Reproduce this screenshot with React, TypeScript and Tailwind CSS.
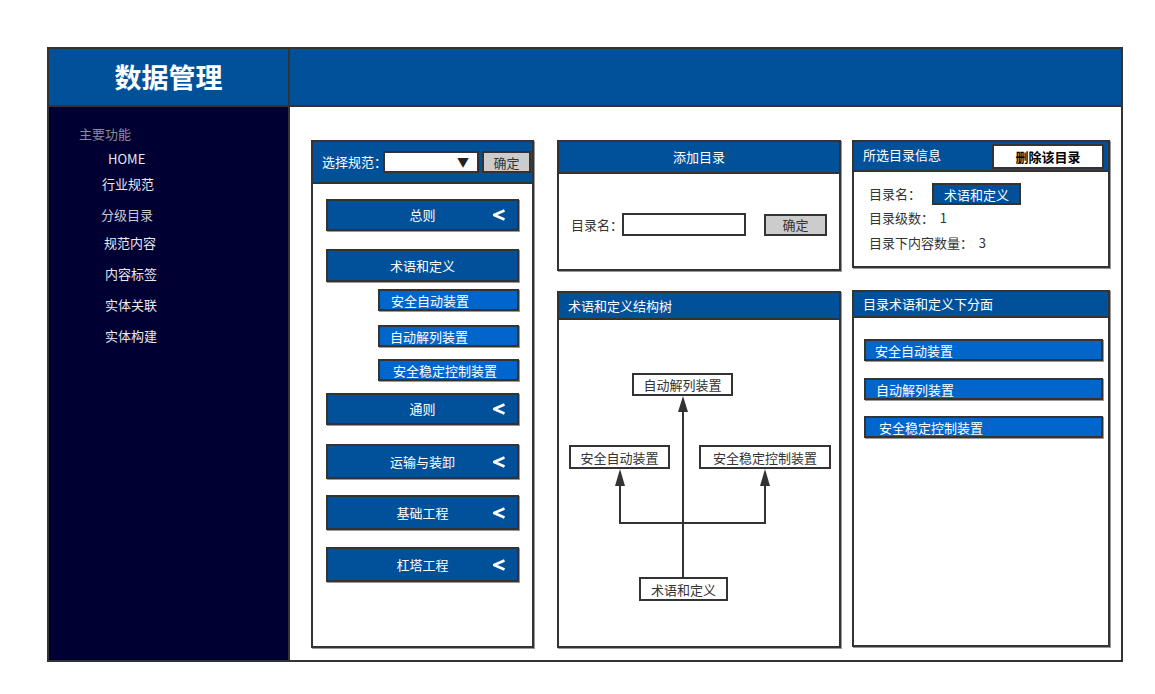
import React from "react";

const FONT = { fontFamily: '"Noto Sans CJK SC", "Noto Sans", sans-serif' };

function Chevron() {
  return (
    <svg width="12" height="12" viewBox="0 0 12 12" className="absolute right-[12px] top-1/2 -translate-y-1/2">
      <polyline points="11.5,1.5 1.2,6 11.5,10.5" fill="none" stroke="white" strokeWidth="2.6" strokeLinejoin="miter" />
    </svg>
  );
}

function AccordionItem({ label, h, mt, chevron = true }: { label: string; h: string; mt: string; chevron?: boolean }) {
  return (
    <div className={`relative ml-[13px] w-[193px] ${h} ${mt} bg-[#00519a] border-2 border-[#333] shadow-[1px_1px_0_#999] flex items-center justify-center text-white text-[13px]`}>
      <span>{label}</span>
      {chevron && <Chevron />}
    </div>
  );
}

function SubItem({ label, mt, pl }: { label: string; mt: string; pl: string }) {
  return (
    <div className={`ml-[65px] w-[141px] h-[22px] ${mt} ${pl} bg-[#0066cc] border-2 border-[#333] shadow-[1px_1px_0_#999] flex items-center text-white text-[13px] leading-none`}>
      {label}
    </div>
  );
}

function FacetItem({ label, mt, pl }: { label: string; mt: string; pl: string }) {
  return (
    <div className={`ml-[10px] w-[239px] h-[22px] ${mt} ${pl} bg-[#0066cc] border-2 border-[#333] shadow-[1px_1px_0_#999] flex items-center text-white text-[13px] leading-none`}>
      {label}
    </div>
  );
}

function TreeNode({ label, cls }: { label: string; cls: string }) {
  return (
    <div className={`absolute ${cls} bg-white border-2 border-[#333] flex items-center justify-center text-[13px] text-[#333] leading-none`}>
      {label}
    </div>
  );
}

const sideItems = [
  { label: "主要功能", cls: "mt-[17px] ml-[30px] text-[#8a8a9a]" },
  { label: "HOME", cls: "mt-[5px] ml-[59px] text-[#e8e8f0]" },
  { label: "行业规范", cls: "mt-[5px] ml-[53px] text-[#e8e8f0]" },
  { label: "分级目录", cls: "mt-[11px] ml-[52px] text-[#c8c8d4]" },
  { label: "规范内容", cls: "mt-[8px] ml-[55px] text-[#e8e8f0]" },
  { label: "内容标签", cls: "mt-[11px] ml-[56px] text-[#e8e8f0]" },
  { label: "实体关联", cls: "mt-[11px] ml-[56px] text-[#e8e8f0]" },
  { label: "实体构建", cls: "mt-[11px] ml-[56px] text-[#e8e8f0]" },
];

export default function App() {
  return (
    <div className="w-[1155px] h-[694px] bg-white overflow-hidden pt-[47px] pl-[47px]" style={FONT}>
      <div className="w-[1076px] h-[615px] border-2 border-[#333] flex flex-col">
        {/* header */}
        <div className="h-[58px] flex border-b-2 border-[#333] bg-[#00519a] shrink-0">
          <div className="w-[241px] border-r-2 border-[#333] flex items-center justify-center">
            <span className="text-white text-[27px] font-bold">数据管理</span>
          </div>
          <div className="flex-1" />
        </div>

        <div className="flex-1 flex min-h-0">
          {/* sidebar */}
          <div className="w-[241px] border-r-2 border-[#333] bg-[#000033] flex flex-col text-[13px]">
            {sideItems.map((s) => (
              <div key={s.label} className={`h-[20px] leading-[20px] ${s.cls}`}>{s.label}</div>
            ))}
          </div>

          {/* content */}
          <div className="flex-1 bg-white pl-[21px] pt-[33px] flex items-start">
            {/* left panel */}
            <div className="w-[223px] h-[508px] border-2 border-[#333] shadow-[1px_1px_0_#999] flex flex-col">
              <div className="h-[42px] bg-[#00519a] border-b-2 border-[#333] flex items-center pl-[9px] text-[13px]">
                <span className="text-white">选择规范：</span>
                <div className="relative ml-[-4px] w-[96px] h-[22px] bg-white border-2 border-[#333]">
                  <span className="absolute right-[8px] top-1/2 -translate-y-1/2 text-[12px] text-[#222] leading-none">▼</span>
                </div>
                <div className="ml-[3px] w-[49px] h-[22px] bg-[#cccccc] border-2 border-[#333] flex items-center justify-center text-[#333] leading-none">确定</div>
              </div>
              <AccordionItem label="总则" h="h-[32px]" mt="mt-[15px]" />
              <AccordionItem label="术语和定义" h="h-[33px]" mt="mt-[18px]" chevron={false} />
              <SubItem label="安全自动装置" mt="mt-[7px]" pl="pl-[11px]" />
              <SubItem label="自动解列装置" mt="mt-[14px]" pl="pl-[10px]" />
              <SubItem label="安全稳定控制装置" mt="mt-[12px]" pl="pl-[13px]" />
              <AccordionItem label="通则" h="h-[32px]" mt="mt-[12px]" />
              <AccordionItem label="运输与装卸" h="h-[35px]" mt="mt-[19px]" />
              <AccordionItem label="基础工程" h="h-[35px]" mt="mt-[16px]" />
              <AccordionItem label="杠塔工程" h="h-[35px]" mt="mt-[17px]" />
            </div>

            {/* middle column */}
            <div className="ml-[23px] w-[284px] flex flex-col">
              <div className="h-[131px] border-2 border-[#333] shadow-[1px_1px_0_#999] flex flex-col">
                <div className="h-[32px] bg-[#00519a] border-b-2 border-[#333] flex items-center justify-center text-white text-[13px]">添加目录</div>
                <div className="flex items-center pl-[12px] pt-[39px] text-[13px] text-[#333]">
                  <span>目录名：</span>
                  <div className="ml-[-1px] w-[124px] h-[23px] bg-white border-2 border-[#333]" />
                  <div className="ml-[18px] w-[63px] h-[22px] bg-[#cccccc] border-2 border-[#333] flex items-center justify-center leading-none">确定</div>
                </div>
              </div>

              <div className="mt-[20px] h-[357px] border-2 border-[#333] shadow-[1px_1px_0_#999] flex flex-col">
                <div className="h-[27px] bg-[#00519a] border-b-2 border-[#333] flex items-center pl-[9px] text-white text-[13px]">术语和定义结构树</div>
                <div className="relative flex-1">
                  <svg className="absolute inset-0" width="280" height="326">
                    <g stroke="#333" strokeWidth="2" fill="none">
                      <line x1="124" y1="257" x2="124" y2="90" />
                      <polyline points="61,164 61,203 206,203 206,164" />
                    </g>
                    <g fill="#333">
                      <polygon points="124,76 119,92 129,92" />
                      <polygon points="61,149 56,166 66,166" />
                      <polygon points="206,149 201,166 211,166" />
                    </g>
                  </svg>
                  <TreeNode label="自动解列装置" cls="left-[73px] top-[53px] w-[101px] h-[23px]" />
                  <TreeNode label="安全自动装置" cls="left-[10px] top-[125px] w-[101px] h-[24px]" />
                  <TreeNode label="安全稳定控制装置" cls="left-[140px] top-[125px] w-[132px] h-[24px]" />
                  <TreeNode label="术语和定义" cls="left-[80px] top-[257px] w-[89px] h-[24px]" />
                </div>
              </div>
            </div>

            {/* right column */}
            <div className="ml-[11px] w-[258px] flex flex-col">
              <div className="h-[128px] border-2 border-[#333] shadow-[1px_1px_0_#999] flex flex-col">
                <div className="h-[30px] bg-[#00519a] border-b-2 border-[#333] flex items-center pl-[9px] text-white text-[13px]">
                  <span className="-mt-[2px]">所选目录信息</span>
                  <div className="ml-auto mr-[4px] w-[112px] h-[25px] bg-white border-2 border-[#333] flex items-center justify-center text-black font-bold leading-none">删除该目录</div>
                </div>
                <div className="flex flex-col pl-[15px] text-[13px] text-[#333]">
                  <div className="mt-[11px] flex items-center h-[22px]">
                    <span>目录名：</span>
                    <div className="ml-[11px] w-[89px] h-[22px] bg-[#00519a] border-2 border-[#333] flex items-center justify-center text-white leading-none">术语和定义</div>
                  </div>
                  <div className="mt-[1px] h-[24px] leading-[24px]">目录级数：&nbsp;&nbsp;1</div>
                  <div className="mt-[1px] h-[24px] leading-[24px]">目录下内容数量：&nbsp;&nbsp;3</div>
                </div>
              </div>

              <div className="mt-[22px] h-[357px] border-2 border-[#333] shadow-[1px_1px_0_#999] flex flex-col">
                <div className="h-[26px] bg-[#00519a] border-b-2 border-[#333] flex items-center pl-[9px] text-white text-[13px]">目录术语和定义下分面</div>
                <FacetItem label="安全自动装置" mt="mt-[21px]" pl="pl-[9px]" />
                <FacetItem label="自动解列装置" mt="mt-[17px]" pl="pl-[10px]" />
                <FacetItem label="安全稳定控制装置" mt="mt-[16px]" pl="pl-[13px]" />
              </div>
            </div>
          </div>
        </div>
      </div>
    </div>
  );
}
